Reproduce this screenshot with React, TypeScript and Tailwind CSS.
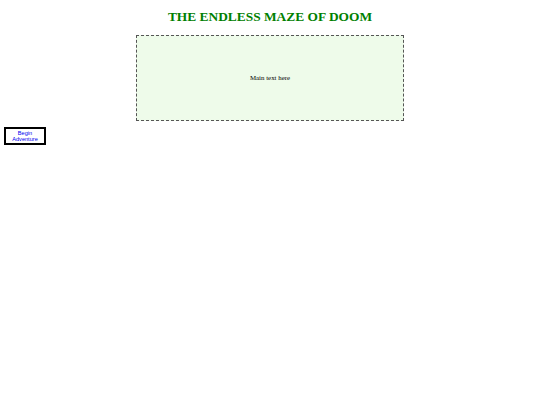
export default function App() {
  return (
    <div className="w-[540px] h-[405px] bg-white" style={{ fontFamily: '"Liberation Serif", serif' }}>
      <h1 className="pt-[9px] text-center text-[13.4px] font-bold text-[#008000] leading-[1.15]">
        THE ENDLESS MAZE OF DOOM
      </h1>
      <div className="mx-auto mt-[11px] w-[268px] h-[86px] border border-dashed border-[#555] bg-[#eefbea] flex items-center justify-center text-[6.9px] text-black">
        Main text here
      </div>
      <div className="mt-[6px] ml-[4px]">
        <button className="w-[42px] h-[18px] border-2 border-black bg-white text-[5.6px] leading-[1.1] text-[#0000ee] flex flex-col items-center justify-center" style={{ fontFamily: '"Liberation Sans", sans-serif' }}>
          <span>Begin</span>
          <span>Adventure</span>
        </button>
      </div>
    </div>
  );
}
